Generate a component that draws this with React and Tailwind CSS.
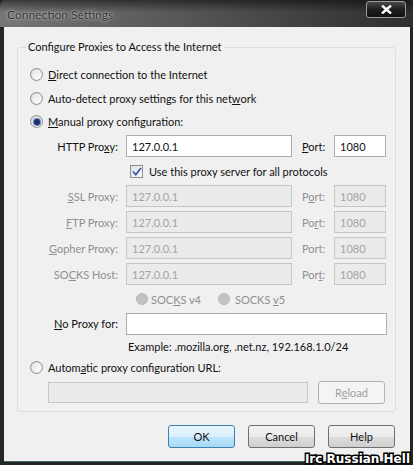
import React from 'react';

const font = "font-['Lato','Liberation_Sans',sans-serif]";

function Radio({ checked, disabled }) {
  if (disabled) {
    return <span className="block w-[12px] h-[12px] rounded-full bg-[#c2c2c2] border border-[#b8b8b8] shrink-0" />;
  }
  return (
    <span className="w-[13px] h-[13px] rounded-full border border-[#8e8f8f] bg-[linear-gradient(135deg,#d4d4d4,#f6f6f6)] flex items-center justify-center shrink-0">
      {checked ? (
        <span className="w-[6px] h-[6px] rounded-full bg-[#1c2f6b] shadow-[0_0_0_1px_#6c86c8]" />
      ) : (
        <span className="w-[9px] h-[9px] rounded-full bg-[linear-gradient(135deg,#e4e4e4,#ffffff)]" />
      )}
    </span>
  );
}

function Input({ value, disabled, className }) {
  return (
    <div
      className={`h-[22px] flex items-center px-[5px] border ${
        disabled ? 'bg-[#ebebeb] border-[#c6c6c6] text-[#a3a3a3]' : 'bg-white border-[#acacac] text-[#111]'
      } ${className}`}
    >
      {value}
    </div>
  );
}

function ProxyRow({ label, port, disabled, h = 'h-[26px]' }) {
  const tone = disabled ? 'text-[#8f8f8f]' : 'text-[#111]';
  return (
    <div className={`flex items-center ${h}`}>
      <div className={`w-[100px] text-right ${tone}`}>{label}</div>
      <Input value="127.0.0.1" disabled={disabled} className="ml-[8px] w-[166px]" />
      <div className={`ml-[10px] w-[32px] ${tone}`}>{port}</div>
      <Input value="1080" disabled={disabled} className="w-[52px]" />
    </div>
  );
}

function Button({ children, primary }) {
  return (
    <button
      className={`w-[67px] h-[23px] rounded-[3px] border text-[#111] ${
        primary
          ? 'border-[#3c7fb1] bg-[linear-gradient(to_bottom,#eaf6fd_0%,#d9f0fc_50%,#bee6fd_50%,#a7d9f5_100%)]'
          : 'border-[#707070] bg-[linear-gradient(to_bottom,#f2f2f2_0%,#ebebeb_50%,#dddddd_50%,#cfcfcf_100%)]'
      }`}
    >
      {children}
    </button>
  );
}

export default function App() {
  return (
    <div className={`relative w-[413px] h-[465px] bg-[#262626] flex flex-col text-[11px] leading-none ${font}`}>
      {/* Title bar */}
      <div className="h-[27px] shrink-0 flex items-start justify-between rounded-t-[6px] bg-[linear-gradient(to_bottom,rgba(0,0,0,0.5),rgba(0,0,0,0)_45%),linear-gradient(to_right,#767676,#525252_50%,#2e2e2e)]">
        <span className="ml-[7px] mt-[9px] text-[12px] text-[#333] [text-shadow:0_0_2px_#d0d0d0,0_0_4px_#a0a0a0]">Connection Settings</span>
        <div className="mr-[7px] mt-[1px] w-[40px] h-[17px] rounded-[3px] border border-[#9a9a9a] bg-[linear-gradient(to_bottom,#4a4a4a,#1e1e1e_50%,#111)] flex items-center justify-center">
          <svg width="11" height="9" viewBox="0 0 11 9">
            <path d="M1 0.5 L10 8.5 M10 0.5 L1 8.5" stroke="#fff" strokeWidth="2.4" />
          </svg>
        </div>
      </div>

      {/* Client area */}
      <div className="ml-[4px] mr-[3px] h-[434px] bg-[#f0f0f0] pl-[13px] pr-[14px] pt-[12px] flex flex-col">
        <fieldset className="w-[379px] border border-[#d5dfe5] rounded-[3px] pt-[7px] pb-[5px]">
          <legend className="ml-[8px] px-[2px] leading-[16px] text-[#111]">Configure Proxies to Access the Internet</legend>

          <div className="pl-[12px] flex items-center gap-[5px] h-[24px] text-[#111]">
            <Radio />
            <span><u>D</u>irect connection to the Internet</span>
          </div>
          <div className="pl-[12px] flex items-center gap-[5px] h-[24px] text-[#111]">
            <Radio />
            <span>Auto-detect proxy settings for this net<u>w</u>ork</span>
          </div>
          <div className="pl-[12px] flex items-center gap-[5px] h-[23px] text-[#111]">
            <Radio checked />
            <span><u>M</u>anual proxy configuration:</span>
          </div>

          <ProxyRow label={<>HTTP Pro<u>x</u>y:</>} port={<><u>P</u>ort:</>} />

          <div className="pl-[112px] flex items-center gap-[6px] h-[24px] text-[#111]">
            <span className="w-[13px] h-[13px] border border-[#8e8f8f] bg-[linear-gradient(135deg,#dfe3ea,#f4f6fa)] flex items-center justify-center">
              <svg width="10" height="9" viewBox="0 0 10 9">
                <path d="M1 4.5 L3.8 7.5 L9 1" fill="none" stroke="#3f5ba0" strokeWidth="1.8" />
              </svg>
            </span>
            <span>Use this proxy server for all protocols</span>
          </div>

          <ProxyRow disabled label={<><u>S</u>SL Proxy:</>} port={<>P<u>o</u>rt:</>} />
          <ProxyRow disabled label={<><u>F</u>TP Proxy:</>} port={<>Po<u>r</u>t:</>} />
          <ProxyRow disabled label={<><u>G</u>opher Proxy:</>} port={<>Port:</>} />
          <ProxyRow disabled label={<>SO<u>C</u>KS Host:</>} port={<>Por<u>t</u>:</>} />

          <div className="pl-[118px] flex items-center h-[24px] text-[#8f8f8f]">
            <Radio disabled />
            <span className="ml-[3px]">SOC<u>K</u>S v4</span>
            <span className="ml-[17px]"><Radio disabled /></span>
            <span className="ml-[5px]">SOCKS <u>v</u>5</span>
          </div>

          <div className="flex items-center h-[25px] text-[#111]">
            <div className="w-[100px] text-right"><u>N</u>o Proxy for:</div>
            <Input value="" className="ml-[8px] w-[261px]" />
          </div>

          <div className="pl-[110px] flex items-center h-[20px] text-[#111]">
            Example: .mozilla.org, .net.nz, 192.168.1.0/24
          </div>

          <div className="pl-[12px] flex items-center gap-[5px] h-[22px] text-[#111]">
            <Radio />
            <span>Autom<u>a</u>tic proxy configuration URL:</span>
          </div>

          <div className="pl-[30px] flex items-center h-[28px]">
            <div className="w-[260px] h-[21px] bg-[#ebebeb] border border-[#c6c6c6]" />
            <button className="ml-[10px] w-[67px] h-[23px] rounded-[3px] border border-[#adb2b5] bg-[#f4f4f4] text-[#a0a0a0]">
              R<u>e</u>load
            </button>
          </div>
        </fieldset>

        <div className="mt-[13px] flex justify-end gap-[13px] pr-[1px]">
          <Button primary>OK</Button>
          <Button>Cancel</Button>
          <Button>Help</Button>
        </div>
      </div>
      <div className="ml-[4px] mr-[3px] h-[1px] bg-[#3d6b6f]" />

      <span className="absolute right-[3px] bottom-[0px] text-[12px] font-bold text-white font-['DejaVu_Sans',sans-serif] [-webkit-text-stroke:3px_black] [paint-order:stroke_fill]">
        Irc Russian Hell
      </span>
    </div>
  );
}
